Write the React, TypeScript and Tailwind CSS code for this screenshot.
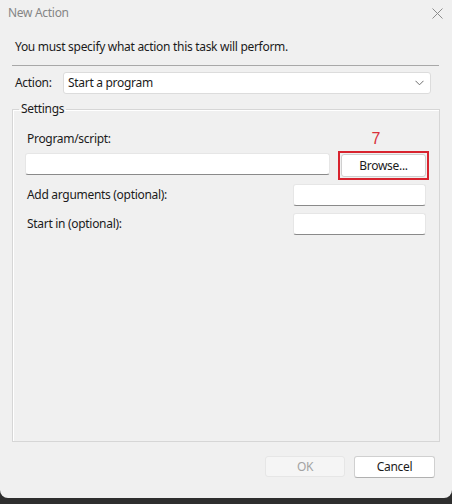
import React from 'react';

const FONT = "font-['Noto_Sans','Open_Sans',sans-serif]";

const TextBox = ({ className = '' }: { className?: string }) => (
  <div
    className={`h-[22px] bg-white border border-[#e6e6e6] border-b-[#8a8a8a] rounded-[3px] ${className}`}
  />
);

export default function App() {
  return (
    <div className={`w-[452px] h-[504px] bg-[#2e2e2e] ${FONT} text-[12px] tracking-[-0.3px] text-[#1b1b1b]`}>
      <div className="h-[498px] bg-[#f0f0f0] rounded-b-[8px] flex flex-col">
        {/* title bar */}
        <div className="h-[26px] flex items-center justify-between pl-[8px] pr-[9px]">
          <span className="text-[#858585] leading-[16px]">New Action</span>
          <svg width="11" height="11" viewBox="0 0 11 11" className="stroke-[#8c8c8c]">
            <path d="M0.5 0.5 L10.5 10.5 M10.5 0.5 L0.5 10.5" strokeWidth="1" fill="none" />
          </svg>
        </div>

        <p className="mt-[13px] pl-[15px] leading-[16px]">
          You must specify what action this task will perform.
        </p>
        <div className="mt-[10px] ml-[12px] mr-[13px] h-px bg-[#a8a8a8]" />

        {/* action row */}
        <div className="mt-[6px] flex items-center pl-[15px] pr-[21px]">
          <span className="w-[48px] leading-[16px]">Action:</span>
          <div className="flex-1 h-[22px] bg-white border border-[#dcdcdc] rounded-[3px] flex items-center justify-between pl-[4px] pr-[6px]">
            <span className="leading-[16px]">Start a program</span>
            <svg width="9" height="6" viewBox="0 0 9 6" className="stroke-[#6e6e6e]">
              <path d="M0.5 0.8 L4.5 4.8 L8.5 0.8" strokeWidth="1" fill="none" />
            </svg>
          </div>
        </div>

        {/* settings group */}
        <fieldset className="mt-[7px] mx-[12px] flex-1 border border-[#d6d6d6] shadow-[inset_1px_1px_0_#ffffff] pl-[12px] pr-[10px] min-h-0">
          <legend className="-ml-[6px] px-[2px] leading-[16px]">Settings</legend>

          <div className="mt-[14px] flex items-center justify-between pl-[2px]">
            <span className="leading-[16px]">Program/script:</span>
            <span className="mr-[49px] text-[16px] leading-[16px] text-[#d9303a] font-['Liberation_Sans',sans-serif]">
              7
            </span>
          </div>

          <div className="mt-[4px] flex items-start gap-[8px]">
            <TextBox className="flex-1 mt-[2px]" />
            <div className="w-[91px] h-[29px] border-2 border-[#d8232e] p-[1px]">
              <button className="w-full h-full bg-white border border-[#cfcfcf] rounded-[3px] flex items-center justify-center leading-[16px]">
                Browse...
              </button>
            </div>
          </div>

          <div className="mt-[4px] flex items-center justify-between pl-[2px] pr-[3px]">
            <span className="leading-[16px]">Add arguments (optional):</span>
            <TextBox className="w-[133px]" />
          </div>

          <div className="mt-[7px] flex items-center justify-between pl-[2px] pr-[3px]">
            <span className="leading-[16px]">Start in (optional):</span>
            <TextBox className="w-[133px]" />
          </div>
        </fieldset>

        {/* buttons */}
        <div className="mt-[14px] mb-[20px] flex justify-end gap-[9px] pr-[17px]">
          <button className="w-[80px] h-[21px] bg-[#f5f5f5] border border-[#e6e6e6] rounded-[3px] text-[#a3a3a3] leading-[16px]">
            OK
          </button>
          <button className="w-[81px] h-[22px] bg-white border border-[#d0d0d0] border-b-[#b0b0b0] rounded-[3px] leading-[16px]">
            Cancel
          </button>
        </div>
      </div>
    </div>
  );
}
